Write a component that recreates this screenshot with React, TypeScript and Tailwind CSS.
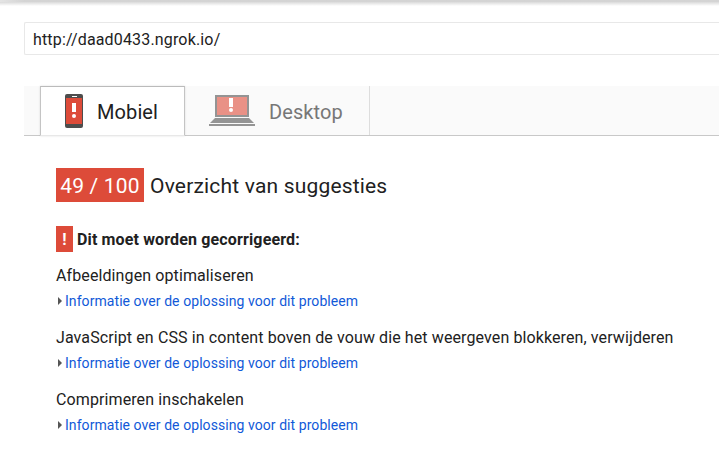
const items = [
  'Afbeeldingen optimaliseren',
  'JavaScript en CSS in content boven de vouw die het weergeven blokkeren, verwijderen',
  'Comprimeren inschakelen',
];

function PhoneIcon() {
  return (
    <svg width="18" height="34" viewBox="0 0 18 34" className="block">
      <rect width="18" height="34" rx="2" fill="#4d4d4d" />
      <rect x="1" y="4" width="16" height="26" fill="#dd4b39" />
      <rect x="7" y="2" width="5" height="1" fill="#fff" />
      <rect x="7" y="9" width="4" height="9" fill="#fff" />
      <circle cx="9" cy="22" r="2" fill="#fff" />
    </svg>
  );
}

function LaptopIcon() {
  return (
    <svg width="46" height="31" viewBox="0 0 46 31" className="block">
      <rect x="6" y="0" width="34" height="22" fill="#949494" />
      <rect x="8" y="2" width="30" height="18" fill="#e99186" />
      <rect x="20" y="3" width="4" height="9" fill="#fff" />
      <circle cx="22" cy="15" r="2" fill="#fff" />
      <path d="M6 23h34l5 5H1z" fill="#949494" />
      <rect y="29" width="46" height="2" fill="#949494" />
    </svg>
  );
}

export default function App() {
  return (
    <div className="h-[453px] w-[719px] overflow-hidden bg-white font-[Roboto,sans-serif] text-[#212121]">
      <div className="h-[2px] bg-linear-to-r from-[#e4e4e4] from-0% via-[#d4d4d4] via-[24px] to-[#d4d4d4]" />
      <div className="h-[4px] bg-linear-to-b from-[#dadada] to-white" />
      <div className="mt-[16px] ml-6 flex h-[33px] items-center rounded-l-[2px] border border-r-0 border-[#e8e8e8] pt-0.5 pl-2 text-base tracking-[0.16px]">http://daad0433.ngrok.io/</div>
      <div className="mt-[31px] ml-6 flex h-[50px] border-b border-[#c8c8c8] bg-[#fafafa] pl-4 text-xl">
        <div className="-mb-px flex w-[145px] items-center border border-b-[#e8e8e8] border-x-[#c4c4c4] border-t-[#bbb] bg-white pl-6 shadow-[0_0_2px_rgba(0,0,0,0.12)]">
          <PhoneIcon />
          <span className="ml-[14px] pt-px tracking-[0.1px]">Mobiel</span>
        </div>
        <div className="flex w-[185px] items-center border-r border-[#ddd] pl-6 text-[#777]">
          <LaptopIcon />
          <span className="ml-3.5 pt-0.5 tracking-[0.1px]">Desktop</span>
        </div>
      </div>
      <main className="pt-8 pl-14">
        <h1 className="flex h-[34px] items-center text-[21px] tracking-[0.18px]">
          <span className="flex h-[34px] w-[88px] items-center justify-center bg-[#dd4b39] pt-[3px] text-white">49 / 100</span>
          <span className="ml-1.5 pt-[3px]">Overzicht van suggesties</span>
        </h1>
        <h2 className="mt-6 flex h-[26px] items-center text-base font-bold tracking-[0.14px]">
          <span className="mr-1 flex h-[26px] w-[17px] items-center justify-center bg-[#dd4b39] pt-0.5 text-white">!</span>
          <span className="pt-0.5">Dit moet worden gecorrigeerd:</span>
        </h2>
        <div className="mt-3">
          {items.map((item) => (
            <section key={item} className="h-[62px] whitespace-nowrap">
              <h3 className="text-base leading-6 tracking-[0.105px]">{item}</h3>
              <a className="mt-0.5 flex h-[22px] items-center text-sm tracking-[0.065px] text-[#1159d8]">
                <svg width="9" height="8" viewBox="0 0 9 8"><path d="M2 0l4 4-4 4z" fill="#555" /></svg>
                Informatie over de oplossing voor dit probleem
              </a>
            </section>
          ))}
        </div>
      </main>
    </div>
  );
}
